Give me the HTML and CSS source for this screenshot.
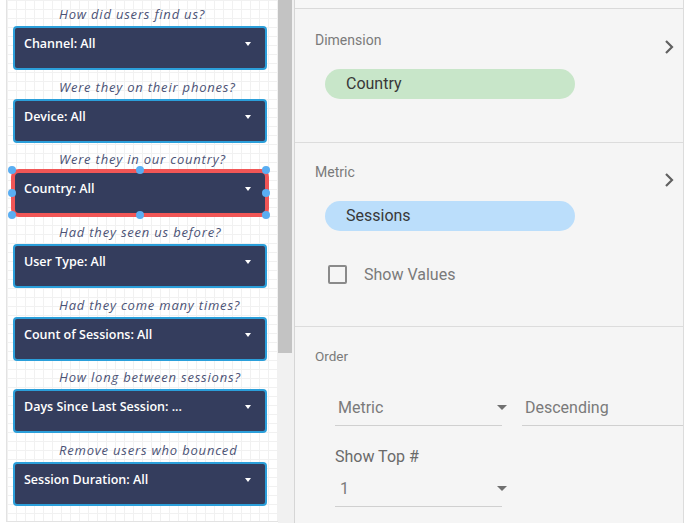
FILE: index.html
```html
<!DOCTYPE html>
<html>
<head>
<meta charset="utf-8">
<link rel="stylesheet" href="styles.css">
</head>
<body>
<div class="app">
  <div class="canvas">
    <div class="q">How did users find us?</div>
    <div class="ctl"><span>Channel: All</span><i class="caret"></i></div>
    <div class="q">Were they on their phones?</div>
    <div class="ctl"><span>Device: All</span><i class="caret"></i></div>
    <div class="q">Were they in our country?</div>
    <div class="ctl selected"><span>Country: All</span><i class="caret"></i>
      <b class="h h-tl"></b><b class="h h-tc"></b><b class="h h-tr"></b>
      <b class="h h-ml"></b><b class="h h-mr"></b>
      <b class="h h-bl"></b><b class="h h-bc"></b><b class="h h-br"></b>
    </div>
    <div class="q">Had they seen us before?</div>
    <div class="ctl"><span>User Type: All</span><i class="caret"></i></div>
    <div class="q">Had they come many times?</div>
    <div class="ctl"><span>Count of Sessions: All</span><i class="caret"></i></div>
    <div class="q">How long between sessions?</div>
    <div class="ctl"><span>Days Since Last Session: ...</span><i class="caret"></i></div>
    <div class="q">Remove users who bounced</div>
    <div class="ctl"><span>Session Duration: All</span><i class="caret"></i></div>
  </div>
  <div class="scrollbar"><div class="thumb"></div></div>
  <div class="panel">
    <div class="top-strip"></div>
    <section class="sec sec-dim">
      <div class="head">
        <span class="label">Dimension</span>
        <svg class="chev" width="10" height="16" viewBox="0 0 10 16"><path d="M2 2 L8 8 L2 14" fill="none" stroke="#616161" stroke-width="2.2"/></svg>
      </div>
      <div class="pill pill-green">Country</div>
    </section>
    <section class="sec sec-met">
      <div class="head head-met">
        <span class="label">Metric</span>
        <svg class="chev" width="10" height="16" viewBox="0 0 10 16"><path d="M2 2 L8 8 L2 14" fill="none" stroke="#616161" stroke-width="2.2"/></svg>
      </div>
      <div class="pill pill-blue">Sessions</div>
      <div class="check-row"><span class="box"></span><span class="check-label">Show Values</span></div>
    </section>
    <section class="sec sec-order">
      <div class="label">Order</div>
      <div class="dd-row">
        <div class="dd dd-metric"><span>Metric</span><i class="tri"></i></div>
        <div class="dd dd-desc"><span>Descending</span></div>
      </div>
      <div class="top-label">Show Top #</div>
      <div class="dd dd-top"><span>1</span><i class="tri"></i></div>
    </section>
  </div>
  <div class="rest"></div>
</div>
</body>
</html>
```
FILE: styles.css
```css
html, body { margin: 0; padding: 0; background: #fff; }
body { width: 688px; height: 523px; overflow: hidden; font-family: Roboto, "Liberation Sans", sans-serif; }

.app { display: flex; align-items: flex-start; height: 523px; }

.canvas {
  margin-left: 6px;
  width: 271px;
  height: 519px;
  border-left: 1px solid #e3e3e3;
  border-bottom: 1px solid #e3e3e3;
  background-color: #fff;
  background-image:
    linear-gradient(to right, #f1f1f1 1px, transparent 1px),
    linear-gradient(to bottom, #f1f1f1 1px, transparent 1px);
  background-size: 9px 9px;
  display: flex;
  flex-direction: column;
  padding-top: 2px;
  box-sizing: content-box;
}

.q {
  height: 24px;
  line-height: 24px;
  padding-left: 52px;
  font-family: "Open Sans", "DejaVu Sans", sans-serif;
  font-style: italic;
  font-weight: 500;
  font-size: 13px;
  letter-spacing: 0.8px;
  color: #4c5376;
  white-space: nowrap;
}

.ctl {
  position: relative;
  margin-left: 6px;
  margin-bottom: 4.7px;
  width: 254px;
  height: 44px;
  box-sizing: border-box;
  border: 2px solid #2b9fda;
  border-radius: 4px;
  background: #343d5d;
  display: flex;
  align-items: flex-start;
  justify-content: space-between;
  padding: 8px 14px 0 9px;
  font-family: "Open Sans", "Liberation Sans", sans-serif;
  font-weight: 600;
  font-size: 12.5px;
  line-height: 16px;
  color: #fff;
}
.ctl span { white-space: nowrap; }
.caret {
  width: 0; height: 0;
  margin-top: 6px;
  border-left: 3.5px solid transparent;
  border-right: 3.5px solid transparent;
  border-top: 4px solid #fff;
}
.ctl.selected {
  border-color: #f15656;
  border-radius: 6px;
  box-shadow: 0 0 0 2px #f15656;
}
.h {
  position: absolute;
  width: 8px; height: 8px;
  border-radius: 50%;
  background: #5aaef2;
}
.h-tl { left: -7px; top: -7px; }
.h-tc { left: calc(50% - 4px); top: -7px; }
.h-tr { right: -5px; top: -7px; }
.h-ml { left: -7px; top: calc(50% - 4px); }
.h-mr { right: -5px; top: calc(50% - 4px); }
.h-bl { left: -7px; bottom: -6px; }
.h-bc { left: calc(50% - 4px); bottom: -6px; }
.h-br { right: -5px; bottom: -6px; }

.scrollbar {
  width: 16px;
  height: 523px;
  background: #f1f1f1;
  display: flex;
  flex-direction: column;
}
.thumb { width: 14px; height: 353px; background: #c3c3c3; }

.panel {
  width: 388px;
  height: 523px;
  background: #f5f5f5;
  border-left: 1px solid #d6d6d6;
  border-right: 1px solid #dcdcdc;
  display: flex;
  flex-direction: column;
}
.rest { flex: 1; height: 523px; background: #fff; }

.top-strip { height: 8px; border-bottom: 1px solid #dadada; background: #f7f7f7; }

.sec { border-bottom: 1px solid #dcdcdc; padding-left: 20px; }
.head {
  display: flex;
  justify-content: space-between;
  align-items: flex-start;
  height: 22px;
  padding-right: 9px;
}
.label { font-size: 14px; line-height: 16px; color: #7a7a7a; }
.chev { margin-top: 7px; }

.sec-dim { padding-top: 23px; height: 110px; }
.pill {
  margin-top: 15px;
  margin-left: 10px;
  width: 250px;
  height: 30px;
  border-radius: 15px;
  box-sizing: border-box;
  padding-left: 21px;
  line-height: 30px;
  font-size: 16px;
  color: #383838;
}
.pill-green { background: #c8e6c9; }
.pill-blue { background: #bbdefb; }

.sec-met { padding-top: 21px; height: 162px; }
.head-met { height: 23px; }
.head-met .chev { margin-top: 8px; }
.pill-blue { margin-top: 14px; }
.check-row { display: flex; align-items: center; margin-top: 34px; margin-left: 13px; }
.box {
  width: 19px; height: 19px;
  box-sizing: border-box;
  border: 2px solid #8a8a8a;
  border-radius: 2px;
}
.check-label { margin-left: 17px; font-size: 16px; color: #7a7a7a; line-height: 18px; }

.sec-order { padding-top: 21px; border-bottom: none; flex: 1; }
.sec-order > .label { font-size: 13.5px; }
.dd-row { display: flex; margin-top: 26px; margin-left: 20px; gap: 20px; }
.dd {
  height: 36px;
  box-sizing: border-box;
  border-bottom: 1px solid #d0d0d0;
  display: flex;
  align-items: center;
  justify-content: space-between;
  font-size: 16px;
  color: #7a7a7a;
}
.dd span { padding-left: 3px; }
.dd-metric { width: 167px; }
.dd-desc { flex: 1; }
.tri {
  width: 0; height: 0;
  margin-right: -5px;
  border-left: 5px solid transparent;
  border-right: 5px solid transparent;
  border-top: 5px solid #707070;
}
.top-label { margin-top: 21px; margin-left: 20px; font-size: 16px; line-height: 20px; color: #6a6a6a; }
.dd-top { width: 167px; margin-left: 20px; margin-top: 4px; }
.dd-top span { padding-left: 5px; }
```
